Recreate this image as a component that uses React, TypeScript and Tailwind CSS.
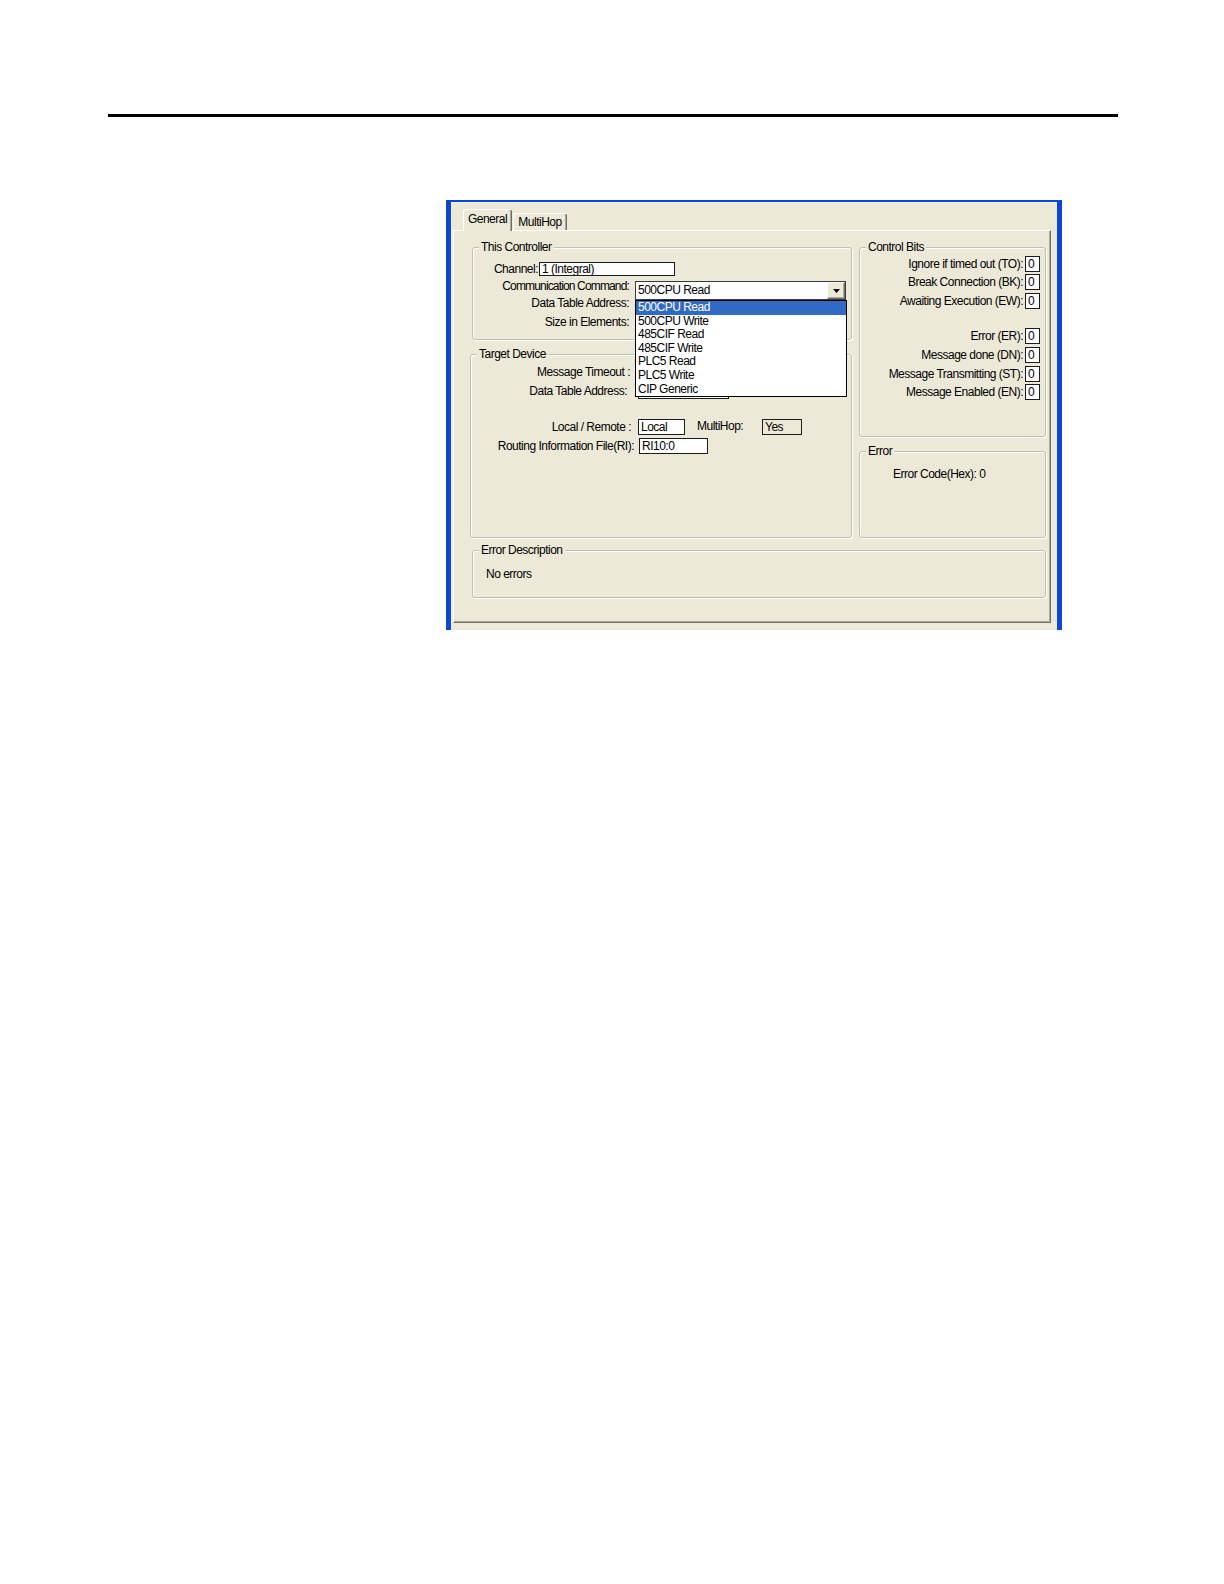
import React from "react";

function GroupBox({
  title,
  className,
  children,
}: {
  title: string;
  className: string;
  children?: React.ReactNode;
}) {
  return (
    <fieldset
      className={`m-0 p-0 min-w-0 border border-[#c3c0af] rounded-[3px] shadow-[inset_1px_1px_0_#ffffff,1px_1px_0_#ffffff] ${className}`}
    >
      <legend className="ml-[6px] px-[2px] h-[13px] leading-[13px] bg-[#ece9d8]">
        {title}
      </legend>
      {children}
    </fieldset>
  );
}

function Box({
  className,
  children,
}: {
  className: string;
  children?: React.ReactNode;
}) {
  return (
    <div
      className={`h-[16px] border border-[#1c1c1c] pl-[2px] leading-[14px] whitespace-nowrap overflow-hidden ${className}`}
    >
      {children}
    </div>
  );
}

function BitRow({ label, mt }: { label: string; mt: string }) {
  return (
    <div className={`flex justify-end items-center h-[16px] pr-[5px] ${mt}`}>
      <span className="leading-[14px] whitespace-nowrap">{label}</span>
      <Box className="ml-[2px] w-[15px] bg-white">0</Box>
    </div>
  );
}

const items = [
  "500CPU Read",
  "500CPU Write",
  "485CIF Read",
  "485CIF Write",
  "PLC5 Read",
  "PLC5 Write",
  "CIP Generic",
];

export default function App() {
  return (
    <div className="min-h-[1584px] bg-white pt-[114px] text-black text-[12px] tracking-[-0.5px] font-['Liberation_Sans',Arial,sans-serif]">
      <div className="ml-[108px] w-[1010px] h-[3px] bg-black" />

      {/* dialog */}
      <div className="ml-[446px] mt-[83px] w-[616px] h-[430px] flex flex-col bg-[#ece9d8] border-t-2 border-l-[5px] border-r-[5px] border-[#0c46d7] shadow-[inset_1px_1px_0_#f7f6f0]">
        {/* tabs */}
        <div className="h-[28px] flex items-end pl-[12px]">
          <div className="relative z-10 -mb-px w-[49px] h-[22px] bg-[#ece9d8] rounded-t-[3px] border-t border-l border-r border-t-white border-l-white border-r-[#716f64] shadow-[inset_-1px_0_0_#aca899] flex justify-center pt-[2px]">
            <span className="leading-[14px]">General</span>
          </div>
          <div className="ml-px w-[54px] h-[17px] bg-[#ece9d8] rounded-t-[3px] border-t border-l border-r border-t-white border-l-white border-r-[#716f64] shadow-[inset_-1px_0_0_#aca899] flex justify-center pt-[1px]">
            <span className="leading-[14px]">MultiHop</span>
          </div>
        </div>

        {/* tab panel */}
        <div className="ml-[2px] w-[598px] h-[393px] border border-t-white border-l-white border-r-[#716f64] border-b-[#716f64] shadow-[inset_-1px_-1px_0_#aca899] pt-[10px] pl-[16px]">
          <div className="flex">
            {/* left column */}
            <div className="flex flex-col w-[382px]">
              <GroupBox title="This Controller" className="ml-[2px] w-[380px] h-[99px]">
                <div className="mt-[7px] h-[16px] flex items-center">
                  <span className="w-[65px] text-right leading-[14px]">Channel:</span>
                  <div className="ml-px w-[136px] h-[14px] border border-[#1c1c1c] bg-white pl-[2px] leading-[12px] whitespace-nowrap overflow-hidden">
                    1 (Integral)
                  </div>
                </div>
                <div className="mt-[2px] flex items-start">
                  <div className="w-[156px] flex flex-col text-right">
                    <div className="leading-[14px] tracking-[-0.85px] whitespace-nowrap">
                      Communication Command:
                    </div>
                    <div className="mt-[3px] leading-[14px] whitespace-nowrap">
                      Data Table Address:
                    </div>
                    <div className="mt-[5px] leading-[14px] whitespace-nowrap">
                      Size in Elements:
                    </div>
                  </div>
                  <div className="relative ml-[6px] mt-[2px] w-[211px]">
                    <div className="h-[19px] border border-[#3a3a3a] bg-white flex">
                      <span className="flex-1 pl-[2px] leading-[17px]">500CPU Read</span>
                      <div className="w-[18px] h-[17px] bg-[#ece9d8] border border-t-white border-l-white border-r-[#716f64] border-b-[#716f64] shadow-[inset_-1px_-1px_0_#aca899] flex items-center justify-center">
                        <svg width="7" height="4" viewBox="0 0 7 4">
                          <polygon points="0,0 7,0 3.5,4" fill="#000" />
                        </svg>
                      </div>
                    </div>
                    <div className="absolute z-20 left-0 top-[19px] w-[212px] border border-black bg-white">
                      {items.map((it, i) => (
                        <div
                          key={it}
                          className={`h-[13.6px] leading-[13.6px] pl-[2px] whitespace-nowrap ${
                            i === 0 ? "bg-[#316ac5] text-white" : ""
                          }`}
                        >
                          {it}
                        </div>
                      ))}
                    </div>
                  </div>
                </div>
              </GroupBox>

              <GroupBox title="Target Device" className="mt-[8px] w-[382px] h-[190px]">
                <div className="mt-[3px] h-[16px] flex items-center">
                  <span className="w-[159px] text-right leading-[14px] whitespace-nowrap">
                    Message Timeout :
                  </span>
                  <Box className="ml-[8px] w-[91px] bg-white" />
                </div>
                <div className="mt-[3px] h-[16px] flex items-center">
                  <span className="w-[156px] text-right leading-[14px] whitespace-nowrap">
                    Data Table Address:
                  </span>
                  <Box className="ml-[11px] w-[91px] bg-white" />
                </div>
                <div className="mt-[20px] h-[16px] flex items-center">
                  <span className="w-[160px] text-right leading-[14px] whitespace-nowrap">
                    Local / Remote :
                  </span>
                  <Box className="ml-[7px] w-[47px] bg-white">Local</Box>
                  <span className="ml-[12px] w-[65px] leading-[14px] mb-[3px]">MultiHop:</span>
                  <Box className="w-[40px] bg-[#ece9d8]">Yes</Box>
                </div>
                <div className="mt-[3px] h-[16px] flex items-center">
                  <span className="w-[163px] text-right leading-[14px] whitespace-nowrap">
                    Routing Information File(RI):
                  </span>
                  <Box className="ml-[5px] w-[69px] bg-white">RI10:0</Box>
                </div>
              </GroupBox>
            </div>

            {/* right column */}
            <div className="ml-[7px] flex flex-col w-[187px]">
              <GroupBox title="Control Bits" className="w-[187px] h-[196px]">
                <BitRow label="Ignore if timed out (TO):" mt="mt-[2px]" />
                <BitRow label="Break Connection (BK):" mt="mt-[2px]" />
                <BitRow label="Awaiting Execution (EW):" mt="mt-[3px]" />
                <BitRow label="Error (ER):" mt="mt-[19px]" />
                <BitRow label="Message done (DN):" mt="mt-[3px]" />
                <BitRow label="Message Transmitting (ST):" mt="mt-[3px]" />
                <BitRow label="Message Enabled (EN):" mt="mt-[2px]" />
              </GroupBox>
              <GroupBox title="Error" className="mt-[8px] w-[187px] h-[93px]">
                <div className="mt-[9px] pl-[33px] leading-[14px] whitespace-nowrap">
                  Error Code(Hex):<span className="ml-[3px]">0</span>
                </div>
              </GroupBox>
            </div>
          </div>

          <GroupBox title="Error Description" className="ml-[2px] mt-[6px] w-[574px] h-[54px]">
            <div className="mt-[10px] pl-[13px] leading-[14px]">No errors</div>
          </GroupBox>
        </div>
      </div>
    </div>
  );
}
